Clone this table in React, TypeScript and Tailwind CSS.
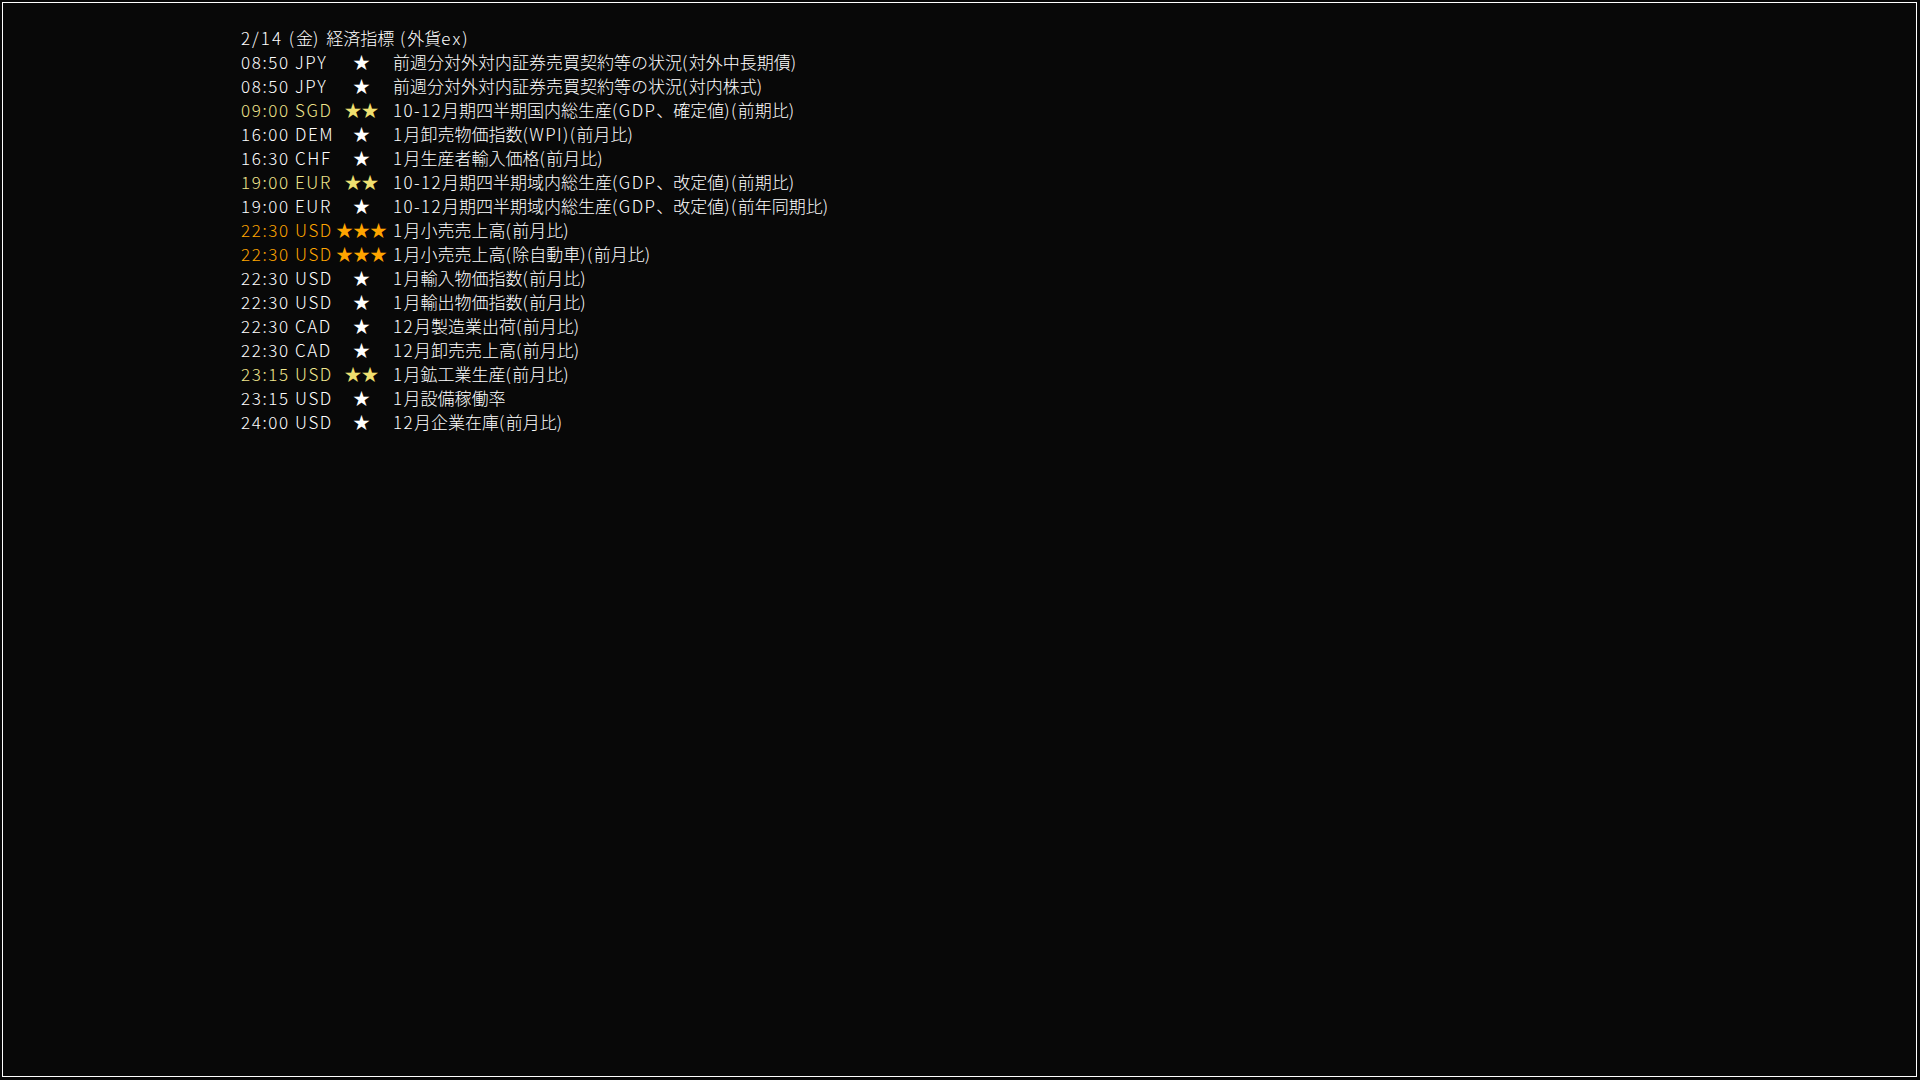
const rows: { time: string; cur: string; stars: number; title: string }[] = [
  { time: '08:50', cur: 'JPY', stars: 1, title: '前週分対外対内証券売買契約等の状況(対外中長期債)' },
  { time: '08:50', cur: 'JPY', stars: 1, title: '前週分対外対内証券売買契約等の状況(対内株式)' },
  { time: '09:00', cur: 'SGD', stars: 2, title: '10-12月期四半期国内総生産(GDP、確定値)(前期比)' },
  { time: '16:00', cur: 'DEM', stars: 1, title: '1月卸売物価指数(WPI)(前月比)' },
  { time: '16:30', cur: 'CHF', stars: 1, title: '1月生産者輸入価格(前月比)' },
  { time: '19:00', cur: 'EUR', stars: 2, title: '10-12月期四半期域内総生産(GDP、改定値)(前期比)' },
  { time: '19:00', cur: 'EUR', stars: 1, title: '10-12月期四半期域内総生産(GDP、改定値)(前年同期比)' },
  { time: '22:30', cur: 'USD', stars: 3, title: '1月小売売上高(前月比)' },
  { time: '22:30', cur: 'USD', stars: 3, title: '1月小売売上高(除自動車)(前月比)' },
  { time: '22:30', cur: 'USD', stars: 1, title: '1月輸入物価指数(前月比)' },
  { time: '22:30', cur: 'USD', stars: 1, title: '1月輸出物価指数(前月比)' },
  { time: '22:30', cur: 'CAD', stars: 1, title: '12月製造業出荷(前月比)' },
  { time: '22:30', cur: 'CAD', stars: 1, title: '12月卸売売上高(前月比)' },
  { time: '23:15', cur: 'USD', stars: 2, title: '1月鉱工業生産(前月比)' },
  { time: '23:15', cur: 'USD', stars: 1, title: '1月設備稼働率' },
  { time: '24:00', cur: 'USD', stars: 1, title: '12月企業在庫(前月比)' },
];

function timeColor(stars: number) {
  if (stars === 3) return 'text-[#ffa500]';
  if (stars === 2) return 'text-[#f0e68c]';
  return 'text-white';
}

function starColor(stars: number) {
  if (stars === 3) return 'text-[#ffa500]';
  if (stars === 2) return 'text-[#f0e070]';
  return 'text-white';
}

// half-width runs are wider in the original bitmap font
function Wide({ text, wide }: { text: string; wide?: boolean }) {
  const parts = text.split(/([\x20-\x7e]+)/);
  return (
    <>
      {parts.map((p, i) =>
        /^[\x20-\x7e]+$/.test(p) ? (
          <span key={i} className={wide ? 'tracking-[2px]' : 'tracking-[1.4px]'}>
            {p}
          </span>
        ) : (
          <span key={i}>{p}</span>
        )
      )}
    </>
  );
}

export default function App() {
  return (
    <div className="w-screen h-screen bg-[#080808] pl-[2px] pt-[2px] overflow-hidden">
      <div
        className="w-[1915px] h-[1075px] border border-white bg-[#080808] pl-[238px] pt-[23px] text-[17px] leading-[24px] font-light text-white"
        style={{ fontFamily: '"Noto Sans CJK JP", "Noto Sans", sans-serif' }}
      >
        <div className="whitespace-pre">
          <Wide text="2/14 (金) 経済指標 (外貨ex)" wide />
        </div>
        {rows.map((r, i) => (
          <div key={i} className="flex whitespace-pre">
            <div className={`w-[95px] tracking-[1.6px] ${timeColor(r.stars)}`}>
              {r.time} {r.cur}
            </div>
            <div className={`w-[51px] text-center ${starColor(r.stars)}`}>
              {'★'.repeat(r.stars)}
            </div>
            <div className="pl-[6px] text-white">
              <Wide text={r.title} />
            </div>
          </div>
        ))}
      </div>
    </div>
  );
}
